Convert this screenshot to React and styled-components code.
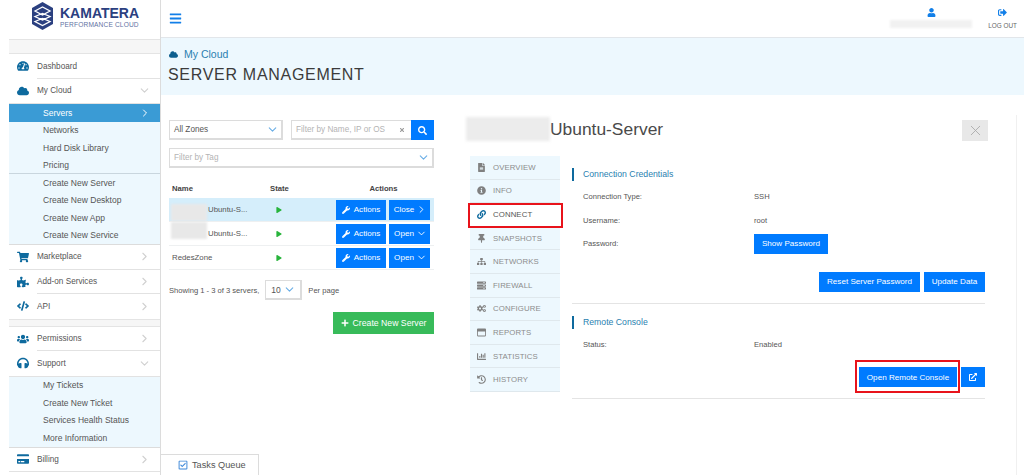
import styled, { createGlobalStyle } from 'styled-components';
import {
  FaBars, FaChartBar, FaCloud, FaCode, FaCogs, FaCreditCard, FaExternalLinkAlt, FaFileAlt,
  FaHeadphones, FaHistory, FaInfoCircle, FaLink, FaPlay, FaPlus, FaPuzzlePiece, FaSearch, FaServer,
  FaShoppingCart, FaSignOutAlt, FaSitemap, FaTachometerAlt, FaThumbtack, FaUser, FaUsers, FaWrench,
  FaRegWindowMaximize, FaRegCheckSquare, FaTimes,
} from 'react-icons/fa';
import { FiChevronDown, FiChevronRight, FiX } from 'react-icons/fi';

const GlobalStyle = createGlobalStyle`
  html, body { margin: 0; height: 100%; background: #fff; overflow: hidden; }
  body { font-family: 'Liberation Sans', Arial, sans-serif; color: #555; }
  * { box-sizing: border-box; }
`;

const Page = styled.div`
  display: flex;
  width: 1024px;
  height: 475px;
  overflow: hidden;
  position: relative;
`;

const Sidebar = styled.aside`
  flex: 0 0 161px;
  border-right: 1px solid #dcdcdc;
  display: flex;
  flex-direction: column;
`;

const LogoBar = styled.div`
  height: 39px;
  display: flex;
  align-items: flex-start;
  padding: 2px 0 0 32px;
  gap: 7px;
`;

const LogoText = styled.div`
  display: flex;
  flex-direction: column;
  color: #2b4080;
  font-size: 14px;
  font-weight: 700;
  line-height: 16px;
  padding-top: 3px;
  small {
    font-size: 6.6px;
    font-weight: 400;
    letter-spacing: 0.15px;
    line-height: 8px;
    color: #5f73a3;
    margin-top: 0;
  }
`;

const Nav = styled.nav`
  margin-left: 9px;
  display: flex;
  flex-direction: column;
`;

const Strip = styled.div`
  height: ${(p) => p.$h}px;
  background: #f6f6f6;
  border-top: 1px solid #e4e4e4;
  border-bottom: 1px solid #e4e4e4;
`;

const NavRow = styled.div`
  height: ${(p) => p.$h || 24.5}px;
  display: flex;
  align-items: center;
  position: relative;
  font-size: 8.2px;
  color: #555;
  padding-left: 8px;
  border-bottom: ${(p) => (p.$full ? '1px solid #e2e2e2' : 'none')};
  svg.lead { width: 12px; height: 12px; color: #0e6a9e; margin-right: 8px; flex: none; }
  svg.arrow { position: absolute; right: 9px; width: 13px; height: 13px; color: #d0d0d0; }
  &::after {
    content: '';
    display: ${(p) => (p.$line ? 'block' : 'none')};
    position: absolute;
    left: 28px;
    right: 0;
    bottom: 0;
    height: 1px;
    background: #e2e2e2;
  }
`;

const SubList = styled.div`
  background: #edf8fe;
  border-bottom: 1px solid #dcdcdc;
`;

const SubItem = styled.div`
  height: 17.5px;
  display: flex;
  align-items: center;
  justify-content: space-between;
  padding: 0 9px 0 34px;
  font-size: 8.5px;
  color: ${(p) => (p.$active ? '#fff' : '#555')};
  background: ${(p) => (p.$active ? '#3a9bd5' : 'transparent')};
  border-bottom: ${(p) => (p.$divide ? '1px solid #c9d6de' : 'none')};
  svg { width: 12px; height: 12px; }
`;

const Main = styled.main`
  flex: 1;
  min-width: 0;
  display: flex;
  flex-direction: column;
`;

const TopBar = styled.header`
  height: 38px;
  border-bottom: 1px solid #e2e6ea;
  display: flex;
  align-items: center;
  justify-content: space-between;
  padding: 0 0 0 8px;
  svg.menu { width: 13px; height: 13px; color: #127fe8; }
`;

const UserArea = styled.div`
  display: flex;
  align-items: flex-start;
  gap: 16px;
  padding: 8px 7px 0 0;
  height: 100%;
`;

const UserBlock = styled.div`
  display: flex;
  flex-direction: column;
  align-items: center;
  gap: ${(p) => p.$gap}px;
  font-size: 6.4px;
  color: #666;
  svg { width: 9px; height: 9px; color: #127fe8; }
`;

const BlurName = styled.div`
  width: 82px;
  height: 8px;
  background: #f1f1f1;
  filter: blur(1px);
`;

const Hero = styled.section`
  height: 57px;
  background: #edf8fe;
  padding: 10px 0 0 7px;
`;

const Crumb = styled.div`
  display: flex;
  align-items: center;
  gap: 6px;
  font-size: 10.5px;
  color: #2a7fb0;
  svg { width: 9px; height: 9px; color: #0e5f8e; margin-left: 1px; }
`;

const Title = styled.h1`
  margin: 6px 0 0;
  font-size: 16px;
  font-weight: 400;
  letter-spacing: 0.7px;
  color: #3b3b3b;
`;

const Content = styled.div`
  flex: 1;
  display: flex;
  min-height: 0;
`;

const ListColumn = styled.div`
  flex: 0 0 282px;
  padding: 25px 9px 0 8px;
  display: flex;
  flex-direction: column;
`;

const FilterRow = styled.div`
  display: flex;
  gap: 8px;
  margin-bottom: 8px;
`;

const Field = styled.div`
  flex: ${(p) => p.$flex || 1};
  height: 20px;
  border: 1px solid #dcdcdc;
  border-width: 1px 2px 2px 1px;
  display: flex;
  align-items: center;
  justify-content: space-between;
  padding: 0 2px 0 4px;
  font-size: 8.2px;
  color: ${(p) => (p.$muted ? '#b4b4b4' : '#555')};
  svg { width: 13px; height: 13px; color: #6aaee6; }
`;

const SearchGroup = styled.div`
  flex: 0 0 143px;
  display: flex;
  height: 20px;
`;

const SearchInput = styled(Field)`
  flex: 1;
  border-right: none;
  padding-right: 6px;
  svg { width: 6px; height: 6px; color: #999; }
`;

const SearchButton = styled.div`
  width: 23px;
  background: #007bff;
  color: #fff;
  display: flex;
  align-items: center;
  justify-content: center;
  svg { width: 9px; height: 9px; }
`;

const TableHead = styled.div`
  display: grid;
  grid-template-columns: 98px 66px 1fr;
  margin-top: 11px;
  height: 19px;
  align-items: center;
  font-size: 7.7px;
  font-weight: 700;
  color: #444;
  padding-left: 3px;
  span:last-child { text-align: center; padding-right: 3px; }
`;

const Row = styled.div`
  display: grid;
  grid-template-columns: 98px 66px 1fr;
  height: 24px;
  align-items: center;
  font-size: 7.8px;
  color: #555;
  padding-left: 3px;
  border-bottom: 1px solid #eef0f1;
  background: ${(p) => (p.$selected ? '#d5eefb' : 'transparent')};
`;

const NameCell = styled.div`
  display: flex;
  align-items: center;
  align-self: stretch;
`;

const BlurCell = styled.div`
  width: 36px;
  height: 17px;
  margin-left: -1px;
  margin-right: 1px;
  align-self: ${(p) => (p.$top ? 'flex-end' : 'flex-start')};
  background: #e8e8e8;
  filter: blur(1px);
`;

const StateIcon = styled(FaPlay)`
  width: 6px;
  height: 6px;
  color: #28b43c;
  margin-left: 6px;
`;

const RowActions = styled.div`
  display: flex;
  gap: 3px;
  justify-content: flex-end;
  padding-right: 4px;
`;

const Button = styled.button`
  border: none;
  margin: 0;
  background: ${(p) => (p.$green ? '#38bb5a' : '#007bff')};
  color: #fff;
  font-family: inherit;
  font-size: ${(p) => p.$size || 8.1}px;
  height: ${(p) => p.$h || 20}px;
  width: ${(p) => (p.$w ? `${p.$w}px` : 'auto')};
  padding: 0;
  display: inline-flex;
  align-items: center;
  justify-content: center;
  gap: 4px;
  flex: none;
  position: relative;
  svg { width: 8px; height: 8px; }
  svg.small { width: 11px; height: 11px; margin: 0 -2px; }
  &::after {
    content: '';
    display: ${(p) => (p.$marked ? 'block' : 'none')};
    position: absolute;
    inset: -7px -3px -6px -4px;
    border: 2px solid #e8131b;
  }
`;

const Pager = styled.div`
  display: flex;
  align-items: center;
  font-size: 7.6px;
  color: #555;
  margin: 10px 0 0;
  gap: 6px;
`;

const PageSelect = styled(Field)`
  flex: 0 0 37px;
  padding: 0 4px 0 5px;
  font-size: 8.5px;
`;

const CreateRow = styled.div`
  display: flex;
  justify-content: flex-end;
  margin-top: 12px;
`;

const Detail = styled.div`
  flex: 0 0 574px;
  border-right: 1px solid #f0f0f0;
  padding: 0 28px 0 23px;
  display: flex;
  flex-direction: column;
  margin-top: 20px;
`;

const DetailHead = styled.div`
  display: flex;
  align-items: center;
  justify-content: space-between;
  height: 24px;
  margin-top: 2px;
`;

const ServerName = styled.div`
  display: flex;
  align-items: center;
  font-size: 17.4px;
  color: #4a4a4a;
`;

const BlurTitle = styled.div`
  width: 84px;
  height: 24px;
  background: #ececec;
  filter: blur(1.5px);
`;

const CloseBox = styled.div`
  width: 26px;
  height: 21px;
  margin-top: 2px;
  background: #e8e8e8;
  color: #a8a8a8;
  display: flex;
  align-items: center;
  justify-content: center;
  svg { width: 17px; height: 17px; stroke-width: 1.2; }
`;

const DetailBody = styled.div`
  display: flex;
  margin-top: 15px;
  gap: 12px;
  padding-left: 4px;
`;

const Tabs = styled.div`
  flex: 0 0 90px;
  background: #edf8fe;
  align-self: flex-start;
  display: flex;
  flex-direction: column;
`;

const Tab = styled.div`
  height: 23.6px;
  display: flex;
  align-items: center;
  gap: 7px;
  padding-left: 7px;
  font-size: 7.8px;
  letter-spacing: 0.1px;
  position: relative;
  color: ${(p) => (p.$active ? '#555' : '#8c8c8c')};
  background: ${(p) => (p.$active ? '#fff' : 'transparent')};
  border-bottom: 1px solid #dfe8ed;
  svg { width: 9px; height: 9px; flex: none; color: ${(p) => (p.$active ? '#0e6a9e' : '#808080')}; }
  &::after {
    content: '';
    display: ${(p) => (p.$active ? 'block' : 'none')};
    position: absolute;
    inset: 0 -3px -2px -2px;
    border: 2px solid #e8131b;
  }
`;

const Sections = styled.div`
  flex: 1;
  min-width: 0;
  padding-right: 3px;
  display: flex;
  flex-direction: column;
`;

const Section = styled.section`
  border-bottom: 1px solid #e4e4e4;
  padding: 12px 0 11px;
`;

const SectionTitle = styled.h2`
  margin: 0 0 4px;
  height: 13px;
  border-left: 2px solid #0e6a9e;
  padding-left: 9px;
  font-size: 8.7px;
  font-weight: 400;
  line-height: 13px;
  color: #2a7fb0;
`;

const InfoRow = styled.div`
  display: grid;
  grid-template-columns: 171px 1fr;
  height: 23.5px;
  align-items: center;
  padding-left: 11px;
  font-size: 7.6px;
  color: #555;
`;

const ButtonRow = styled.div`
  display: flex;
  justify-content: flex-end;
  gap: 4px;
  margin-top: ${(p) => p.$top}px;
`;

const TaskTab = styled.div`
  position: absolute;
  left: 161px;
  bottom: 0;
  width: 98px;
  height: 21px;
  background: #fff;
  border: 1px solid #dcdcdc;
  border-width: 1px 1px 0 0;
  display: flex;
  align-items: center;
  gap: 4px;
  padding-left: 17px;
  font-size: 9.2px;
  color: #555;
  svg { width: 10px; height: 10px; color: #3a86d8; }
`;

const Hexagon = () => (
  <svg width="21" height="28" viewBox="0 0 21 28">
    <path d="M10.5 0 21 6v16L10.5 28 0 22V6z" fill="#2b4080" />
    <path d="M3 9l7.5-4L18 9l-7.5 4zM3 14.5l7.5-3 7.5 3-7.5 3.5zM3 19.5l7.5-3 7.5 3-7.5 4z" fill="none" stroke="#fff" strokeWidth="1.3" />
  </svg>
);

const tabs = [
  ['OVERVIEW', FaFileAlt],
  ['INFO', FaInfoCircle],
  ['CONNECT', FaLink],
  ['SNAPSHOTS', FaThumbtack],
  ['NETWORKS', FaSitemap],
  ['FIREWALL', FaServer],
  ['CONFIGURE', FaCogs],
  ['REPORTS', FaRegWindowMaximize],
  ['STATISTICS', FaChartBar],
  ['HISTORY', FaHistory],
];

const servers = [
  { name: 'Ubuntu-S...', blur: 'top', action: 'Close', selected: true },
  { name: 'Ubuntu-S...', blur: 'bottom', action: 'Open' },
  { name: 'RedesZone', action: 'Open' },
];

export default function App() {
  return (
    <Page>
      <GlobalStyle />
      <Sidebar>
        <LogoBar>
          <Hexagon />
          <LogoText>
            KAMATERA
            <small>PERFORMANCE CLOUD</small>
          </LogoText>
        </LogoBar>
        <Nav>
          <Strip $h={15} />
          <NavRow $line><FaTachometerAlt className="lead" />Dashboard</NavRow>
          <NavRow $h={25.5} $full><FaCloud className="lead" />My Cloud<FiChevronDown className="arrow" /></NavRow>
          <SubList>
            <SubItem $active>Servers<FiChevronRight /></SubItem>
            <SubItem>Networks</SubItem>
            <SubItem>Hard Disk Library</SubItem>
            <SubItem $divide>Pricing</SubItem>
            <SubItem>Create New Server</SubItem>
            <SubItem>Create New Desktop</SubItem>
            <SubItem>Create New App</SubItem>
            <SubItem>Create New Service</SubItem>
          </SubList>
          <NavRow $full><FaShoppingCart className="lead" />Marketplace<FiChevronRight className="arrow" /></NavRow>
          <NavRow $line><FaPuzzlePiece className="lead" />Add-on Services<FiChevronRight className="arrow" /></NavRow>
          <NavRow><FaCode className="lead" />API<FiChevronRight className="arrow" /></NavRow>
          <Strip $h={8} />
          <NavRow $line><FaUsers className="lead" />Permissions<FiChevronRight className="arrow" /></NavRow>
          <NavRow $h={25.5} $full><FaHeadphones className="lead" />Support<FiChevronDown className="arrow" /></NavRow>
          <SubList>
            <SubItem>My Tickets</SubItem>
            <SubItem>Create New Ticket</SubItem>
            <SubItem>Services Health Status</SubItem>
            <SubItem>More Information</SubItem>
          </SubList>
          <NavRow $full><FaCreditCard className="lead" />Billing<FiChevronRight className="arrow" /></NavRow>
        </Nav>
      </Sidebar>
      <Main>
        <TopBar>
          <FaBars className="menu" />
          <UserArea>
            <UserBlock $gap={3}>
              <FaUser />
              <BlurName />
            </UserBlock>
            <UserBlock $gap={5}>
              <FaSignOutAlt />
              LOG OUT
            </UserBlock>
          </UserArea>
        </TopBar>
        <Hero>
          <Crumb><FaCloud />My Cloud</Crumb>
          <Title>SERVER MANAGEMENT</Title>
        </Hero>
        <Content>
          <ListColumn>
            <FilterRow>
              <Field>All Zones<FiChevronDown /></Field>
              <SearchGroup>
                <SearchInput $muted>Filter by Name, IP or OS<FaTimes /></SearchInput>
                <SearchButton><FaSearch /></SearchButton>
              </SearchGroup>
            </FilterRow>
            <Field $muted $flex="0 0 20px">Filter by Tag<FiChevronDown /></Field>
            <TableHead>
              <span>Name</span>
              <span>State</span>
              <span>Actions</span>
            </TableHead>
            {servers.map((s) => (
              <Row key={s.blur || s.name} $selected={s.selected}>
                <NameCell>
                  {s.blur && <BlurCell $top={s.blur === 'top'} />}
                  {s.name}
                </NameCell>
                <StateIcon />
                <RowActions>
                  <Button $w={50}><FaWrench />Actions</Button>
                  <Button $w={41}>
                    {s.action}
                    {s.action === 'Close' ? <FiChevronRight className="small" /> : <FiChevronDown className="small" />}
                  </Button>
                </RowActions>
              </Row>
            ))}
            <Pager>
              Showing 1 - 3 of 3 servers,
              <PageSelect>10<FiChevronDown /></PageSelect>
              Per page
            </Pager>
            <CreateRow>
              <Button $green $w={101} $h={22} $size={8.7}><FaPlus />Create New Server</Button>
            </CreateRow>
          </ListColumn>
          <Detail>
            <DetailHead>
              <ServerName><BlurTitle />Ubuntu-Server</ServerName>
              <CloseBox><FiX /></CloseBox>
            </DetailHead>
            <DetailBody>
              <Tabs>
                {tabs.map(([label, Icon]) => (
                  <Tab key={label} $active={label === 'CONNECT'}><Icon />{label}</Tab>
                ))}
              </Tabs>
              <Sections>
                <Section>
                  <SectionTitle>Connection Credentials</SectionTitle>
                  <InfoRow><span>Connection Type:</span><span>SSH</span></InfoRow>
                  <InfoRow><span>Username:</span><span>root</span></InfoRow>
                  <InfoRow><span>Password:</span><span><Button $w={74}>Show Password</Button></span></InfoRow>
                  <ButtonRow $top={16}>
                    <Button $w={101}>Reset Server Password</Button>
                    <Button $w={61}>Update Data</Button>
                  </ButtonRow>
                </Section>
                <Section>
                  <SectionTitle>Remote Console</SectionTitle>
                  <InfoRow><span>Status:</span><span>Enabled</span></InfoRow>
                  <ButtonRow $top={11}>
                    <Button $w={98} $marked>Open Remote Console</Button>
                    <Button $w={24}><FaExternalLinkAlt /></Button>
                  </ButtonRow>
                </Section>
              </Sections>
            </DetailBody>
          </Detail>
        </Content>
      </Main>
      <TaskTab><FaRegCheckSquare />Tasks Queue</TaskTab>
    </Page>
  );
}
